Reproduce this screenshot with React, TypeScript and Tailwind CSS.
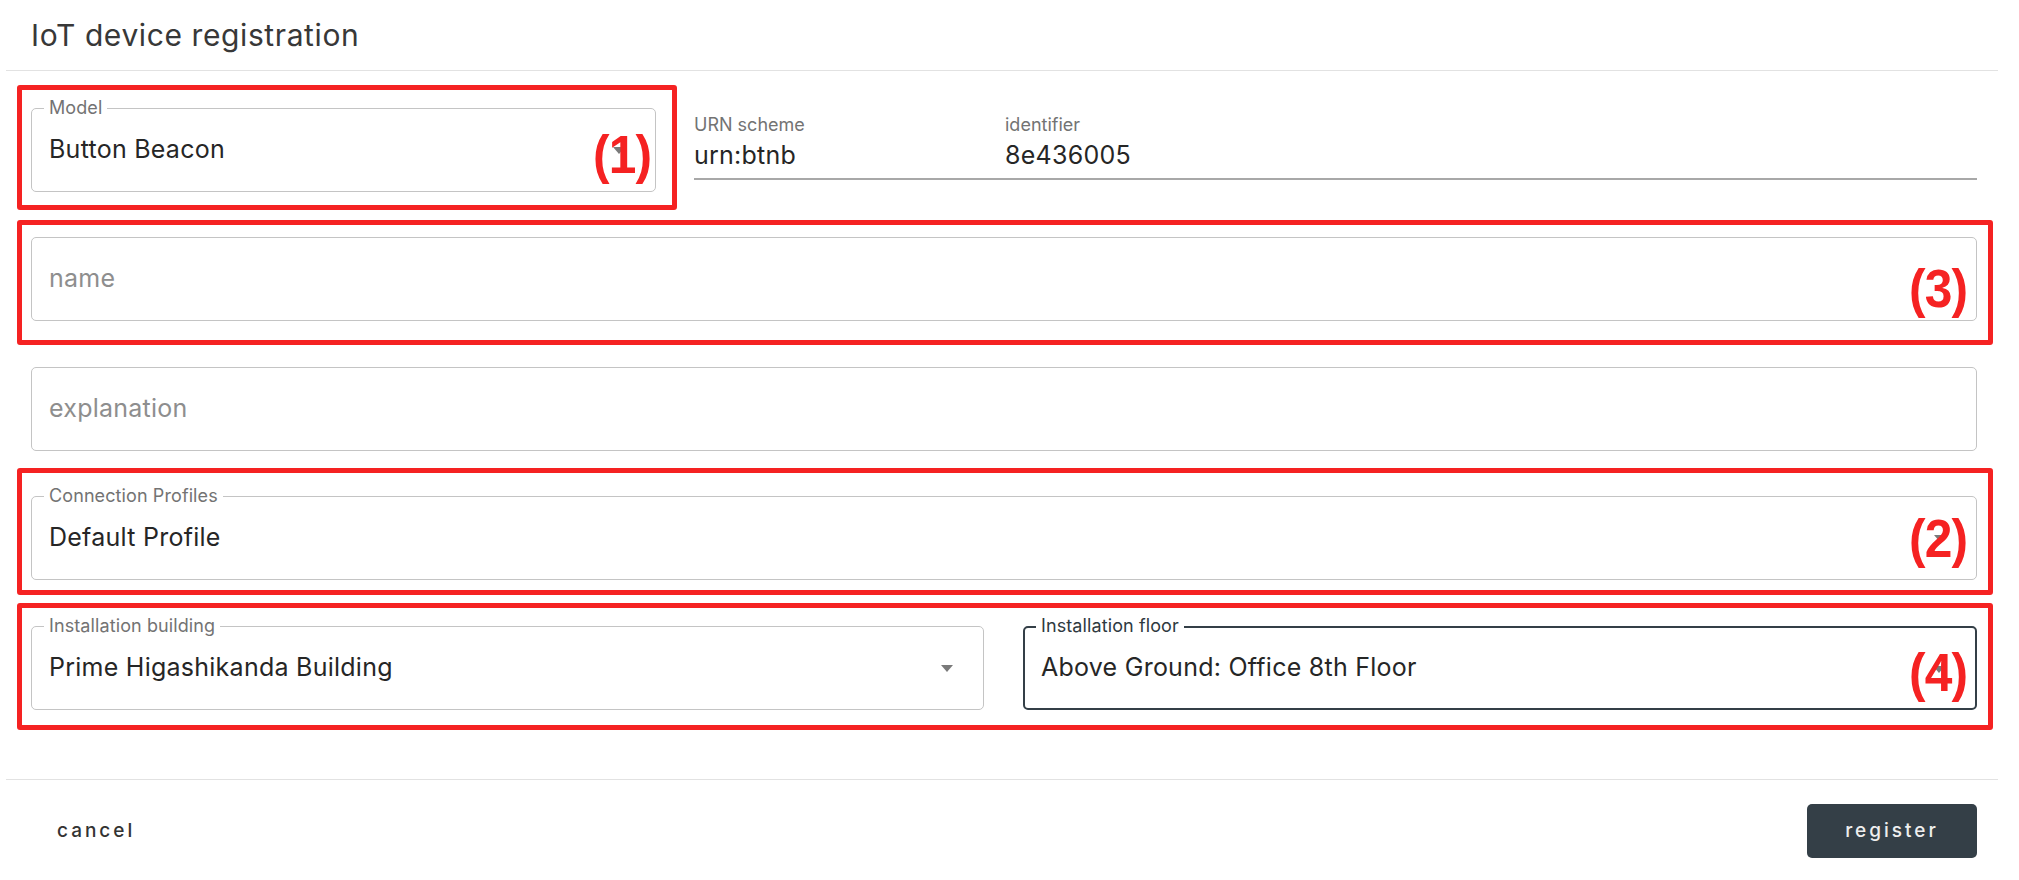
import React from 'react';

const sans = "font-['Inter','Open_Sans',sans-serif]";

const DropArrow = ({ className = '' }: { className?: string }) => (
    <svg className={`absolute ${className}`} width="12" height="7" viewBox="0 0 12 7">
        <path d="M0 0h12L6 7z" fill="#7a7a7a" />
    </svg>
);

// red annotation frame + number, drawn over the form
const Frame = ({ className }: { className: string }) => (
    <div className={`absolute border-[5px] border-[#f52222] rounded-[3px] pointer-events-none ${className}`} />
);

const Mark = ({ n, className }: { n: number; className: string }) => (
    <span
        className={`absolute font-['Liberation_Sans',Arial,sans-serif] font-bold text-[54px] leading-[58px] tracking-[-1px] text-[#f52222] scale-x-[0.92] origin-right ${className}`}
    >
        ({n})
    </span>
);

interface FieldProps {
    label?: string;
    value?: string;
    placeholder?: string;
    select?: boolean;
    active?: boolean;
    className?: string;
    children?: React.ReactNode;
}

const Field = ({ label, value, placeholder, select, active, className = '', children }: FieldProps) => (
    <div
        className={`relative h-[84px] rounded-[5px] flex items-center ${
            active ? 'border-2 border-[#343f47] pl-[16px]' : 'border border-[#c4c4c4] pl-[17px]'
        } ${className}`}
    >
        {label && (
            <span
                className={`absolute bg-white px-[5px] text-[18px] leading-[20px] tracking-[0.1px] ${
                    active ? 'top-[-12px] left-[11px] text-[#2e3940]' : 'top-[-11px] left-[12px] text-[#737373]'
                }`}
            >
                {label}
            </span>
        )}
        {value && <span className="text-[25px] tracking-[0.25px] text-[#262626]">{value}</span>}
        {placeholder && <span className="text-[25px] tracking-[0.25px] text-[#8e8e8e]">{placeholder}</span>}
        {select && <DropArrow className="right-[30px] top-[38px]" />}
        {children}
    </div>
);

export default function App() {
    return (
        <div className={`w-[2019px] h-[880px] bg-white overflow-hidden ${sans}`}>
            {/* Header */}
            <div className="h-[70px] flex items-center px-[31px]">
                <h1 className="text-[30px] tracking-[0.6px] text-[#383838] font-normal">IoT device registration</h1>
            </div>
            <div className="ml-[6px] w-[1992px] border-t border-[#e2e2e2]" />

            {/* Form */}
            <div className="pl-[31px] pr-[42px] pt-[37px] flex flex-col">
                <div className="flex items-start">
                    <Field label="Model" value="Button Beacon" select className="w-[625px] shrink-0">
                        <Frame className="left-[-15px] top-[-24px] w-[660px] h-[125px]" />
                        <Mark n={1} className="right-[4px] top-[16px]" />
                    </Field>
                    <div className="ml-[38px] flex-1 h-[72px] border-b-2 border-[#a8a8a8] flex">
                        <div className="w-[311px] flex flex-col pt-[7px]">
                            <span className="text-[18px] leading-[20px] text-[#737373]">URN scheme</span>
                            <span className="mt-[5px] text-[25px] leading-[30px] tracking-[0.25px] text-[#262626]">urn:btnb</span>
                        </div>
                        <div className="flex flex-col pt-[7px]">
                            <span className="text-[18px] leading-[20px] text-[#737373]">identifier</span>
                            <span className="mt-[5px] text-[25px] leading-[30px] tracking-[0.25px] text-[#262626]">8e436005</span>
                        </div>
                    </div>
                </div>

                <Field placeholder="name" className="mt-[45px]">
                    <Frame className="left-[-15px] top-[-18px] w-[1976px] h-[125px]" />
                    <Mark n={3} className="right-[9px] top-[21px]" />
                </Field>

                <Field placeholder="explanation" className="mt-[46px]" />

                <Field label="Connection Profiles" value="Default Profile" select className="mt-[45px]">
                    <Frame className="left-[-15px] top-[-29px] w-[1976px] h-[127px]" />
                    <Mark n={2} className="right-[9px] top-[12px]" />
                </Field>

                <div className="relative mt-[46px] flex gap-[39px]">
                    <Frame className="left-[-14px] top-[-23px] w-[1976px] h-[127px]" />
                    <Field label="Installation building" value="Prime Higashikanda Building" select className="flex-1" />
                    <Field label="Installation floor" value="Above Ground: Office 8th Floor" select active className="flex-1">
                        <Mark n={4} className="right-[8px] top-[15px]" />
                    </Field>
                </div>
            </div>

            {/* Footer */}
            <div className="mt-[69px] ml-[6px] w-[1992px] border-t border-[#e2e2e2]" />
            <div className="flex items-center justify-between pl-[31px] pr-[42px] pt-[24px]">
                <button className="h-[54px] px-[26px] text-[19px] font-medium tracking-[3px] text-[#333]">cancel</button>
                <button className="h-[54px] w-[170px] rounded-[5px] bg-[#343f47] text-[19px] font-medium tracking-[3px] text-[#eeeeee]">
                    register
                </button>
            </div>
        </div>
    );
}
